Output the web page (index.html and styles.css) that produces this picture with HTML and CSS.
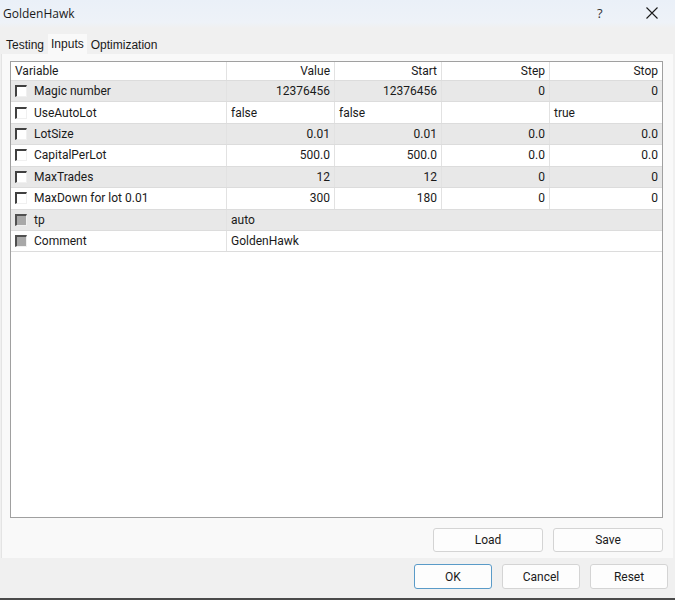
FILE: index.html
```html
<!DOCTYPE html>
<html>
<head>
<meta charset="utf-8">
<link rel="stylesheet" href="styles.css">
</head>
<body>
<div class="window">
  <div class="titlebar">
    <span class="title">GoldenHawk</span>
    <span class="help">?</span>
    <span class="close">
      <svg width="12" height="12" viewBox="0 0 12 12"><path d="M0.5 0.5 L11.5 11.5 M11.5 0.5 L0.5 11.5" stroke="#1a1a1a" stroke-width="1.1" fill="none"/></svg>
    </span>
  </div>
  <div class="tabs">
    <span class="tab">Testing</span>
    <span class="tab active">Inputs</span>
    <span class="tab">Optimization</span>
  </div>
  <div class="panel">
    <div class="grid">
      <div class="row head">
        <div class="c c1">Variable</div>
        <div class="c num">Value</div>
        <div class="c num">Start</div>
        <div class="c num">Step</div>
        <div class="c num">Stop</div>
      </div>
      <div class="row alt">
        <div class="c c1"><span class="cb"></span>Magic number</div>
        <div class="c num">12376456</div>
        <div class="c num">12376456</div>
        <div class="c num">0</div>
        <div class="c num">0</div>
      </div>
      <div class="row">
        <div class="c c1"><span class="cb"></span>UseAutoLot</div>
        <div class="c">false</div>
        <div class="c">false</div>
        <div class="c"></div>
        <div class="c">true</div>
      </div>
      <div class="row alt">
        <div class="c c1"><span class="cb"></span>LotSize</div>
        <div class="c num">0.01</div>
        <div class="c num">0.01</div>
        <div class="c num">0.0</div>
        <div class="c num">0.0</div>
      </div>
      <div class="row">
        <div class="c c1"><span class="cb"></span>CapitalPerLot</div>
        <div class="c num">500.0</div>
        <div class="c num">500.0</div>
        <div class="c num">0.0</div>
        <div class="c num">0.0</div>
      </div>
      <div class="row alt">
        <div class="c c1"><span class="cb"></span>MaxTrades</div>
        <div class="c num">12</div>
        <div class="c num">12</div>
        <div class="c num">0</div>
        <div class="c num">0</div>
      </div>
      <div class="row">
        <div class="c c1"><span class="cb"></span>MaxDown for lot 0.01</div>
        <div class="c num">300</div>
        <div class="c num">180</div>
        <div class="c num">0</div>
        <div class="c num">0</div>
      </div>
      <div class="row alt wide">
        <div class="c c1"><span class="cb dis"></span>tp</div>
        <div class="c span">auto</div>
      </div>
      <div class="row wide">
        <div class="c c1"><span class="cb dis"></span>Comment</div>
        <div class="c span">GoldenHawk</div>
      </div>
    </div>
    <div class="panel-buttons">
      <button class="btn wide-btn">Load</button>
      <button class="btn wide-btn">Save</button>
    </div>
  </div>
  <div class="footer">
    <button class="btn small-btn default">OK</button>
    <button class="btn small-btn">Cancel</button>
    <button class="btn small-btn">Reset</button>
  </div>
</div>
</body>
</html>
```
FILE: styles.css
```css
html, body {
  margin: 0;
  padding: 0;
  background: #f0f0f0;
}
body {
  width: 675px;
  height: 600px;
  overflow: hidden;
  font-family: Roboto, "Liberation Sans", Arial, sans-serif;
  font-size: 12px;
  color: #1a1a1a;
}
.window {
  width: 675px;
  height: 600px;
  box-sizing: border-box;
  border-bottom: 2px solid #4a4a4a;
  background: #f0f0f0;
  display: flex;
  flex-direction: column;
}
.titlebar {
  height: 26px;
  background: linear-gradient(#eaf0f8, #eef2f8 80%, #f0f0f0);
  display: flex;
  align-items: center;
  padding-left: 3px;
  padding-bottom: 2px;
}
.title {
  font-family: "Open Sans", "Noto Sans", sans-serif;
  font-size: 12px;
  color: #1a1a1a;
  flex: 1;
}
.help {
  font-family: "Open Sans", sans-serif;
  font-size: 13px;
  color: #333;
  width: 12px;
  margin-right: 37px;
}
.close {
  width: 12px;
  height: 12px;
  margin-right: 17px;
  display: flex;
}
.tabs {
  height: 26px;
  display: flex;
  align-items: flex-end;
  padding-left: 2px;
}
.tab {
  height: 19px;
  line-height: 20px;
  padding: 0 4px;
  font-family: "Liberation Sans", Arial, sans-serif;
  font-size: 12px;
  color: #1a1a1a;
}
.tab.active {
  height: 21px;
  line-height: 20px;
  background: #f9f9f9;
  padding: 0 3px;
  margin-bottom: -1px;
  position: relative;
}
.panel {
  margin: 0 2px 0 1px;
  height: 504px;
  box-sizing: border-box;
  background: #f9f9f9;
  border-left: 1px solid #e4e4e4;
  padding: 7px 10px 0 8px;
  display: flex;
  flex-direction: column;
}
.grid {
  height: 457px;
  box-sizing: border-box;
  border: 1px solid #a0a0a0;
  background: #fff;
}
.row {
  display: grid;
  grid-template-columns: 216px 108px 107px 108px 1fr;
  height: 21.43px;
  box-sizing: border-box;
  border-bottom: 1px solid #dcdcdc;
}
.row.head {
  height: 19px;
  background: #fff;
}
.row.alt {
  background: #e8e8e8;
}
.row.wide {
  grid-template-columns: 216px 1fr;
}
.c {
  border-right: 1px solid #e2e2e2;
  padding: 0 4px;
  display: flex;
  align-items: center;
  white-space: nowrap;
  overflow: hidden;
}
.c:last-child {
  border-right: none;
}
.c1 {
  padding-left: 4px;
}
.head .c1 {
  padding-left: 4px;
}
.num {
  justify-content: flex-end;
}
.cb {
  width: 12px;
  height: 12px;
  box-sizing: border-box;
  border-top: 2px solid #404040;
  border-left: 2px solid #404040;
  border-right: 1px solid #f0f0f0;
  border-bottom: 1px solid #f0f0f0;
  background: #fff;
  margin-right: 7px;
  flex: none;
}
.cb.dis {
  background: #a8a8a8;
  border-top-color: #505050;
  border-left-color: #505050;
}
.panel-buttons {
  display: flex;
  justify-content: flex-end;
  gap: 10px;
  margin-top: 10px;
}
.btn {
  font-family: Roboto, "Liberation Sans", Arial, sans-serif;
  font-size: 12px;
  color: #1a1a1a;
  background: #fdfdfd;
  border: 1px solid #d4d4d4;
  border-radius: 3px;
  height: 24px;
  padding: 0;
}
.wide-btn {
  width: 110px;
}
.footer {
  display: flex;
  justify-content: flex-end;
  gap: 10px;
  padding: 6px 7px 0 0;
}
.small-btn {
  width: 78px;
  height: 25px;
}
.btn.default {
  border: 1px solid #5a9bc8;
}
```
